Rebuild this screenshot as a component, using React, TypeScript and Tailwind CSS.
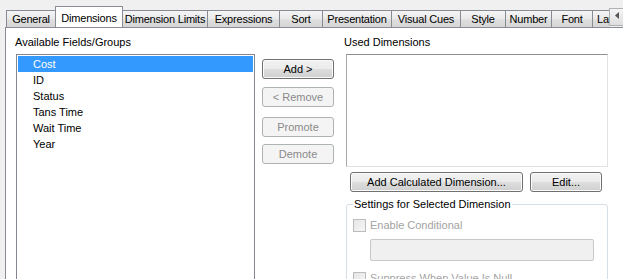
import React from 'react';

const tabs = [
  { label: 'General', w: 'w-[50px]' },
  { label: 'Dimensions', w: 'w-[68px]', active: true },
  { label: 'Dimension Limits', w: 'w-[86px]' },
  { label: 'Expressions', w: 'w-[73px]' },
  { label: 'Sort', w: 'w-[44px]' },
  { label: 'Presentation', w: 'w-[70px]' },
  { label: 'Visual Cues', w: 'w-[70px]' },
  { label: 'Style', w: 'w-[46px]' },
  { label: 'Number', w: 'w-[47px]' },
  { label: 'Font', w: 'w-[42px]' },
];

const fields = ['Cost', 'ID', 'Status', 'Tans Time', 'Wait Time', 'Year'];

function WinButton({ children, disabled, className = '' }: { children: React.ReactNode; disabled?: boolean; className?: string }) {
  if (disabled) {
    return (
      <div className={`h-[20px] shrink-0 flex items-center justify-center rounded-[3px] border border-[#adb2b5] bg-[#f4f4f4] text-[#8a8a8a] ${className}`}>
        {children}
      </div>
    );
  }
  return (
    <div
      className={`h-[20px] shrink-0 flex items-center justify-center rounded-[3px] border border-[#707070] bg-[linear-gradient(#f2f2f2_0%,#ebebeb_48%,#dddddd_52%,#cfcfcf_100%)] shadow-[inset_0_0_0_1px_#fbfbfb] text-black ${className}`}
    >
      {children}
    </div>
  );
}

function CheckBox({ label }: { label: string }) {
  return (
    <div className="flex items-center">
      <div className="w-[13px] h-[13px] shrink-0 border border-[#bcbcbc] bg-[linear-gradient(135deg,#e6e6e6,#f6f6f6)]" />
      <span className="ml-[4px] text-[#a3a3a3] leading-[13px] whitespace-nowrap">{label}</span>
    </div>
  );
}

export default function App() {
  return (
    <div
      className="w-[623px] h-[279px] overflow-hidden bg-[#f0f0f0] flex flex-col text-[11px] text-black"
      style={{ fontFamily: '"Liberation Sans", Arial, sans-serif' }}
    >
      {/* Tab strip */}
      <div className="h-[27px] flex items-end pl-[6px] shrink-0">
        <div className="flex items-end flex-1 overflow-hidden h-[27px]">
          {tabs.map((t) =>
            t.active ? (
              <div
                key={t.label}
                className={`${t.w} shrink-0 h-[22px] -mb-[1px] -mr-px relative z-10 bg-white border border-b-0 border-[#898c95] flex justify-center pt-[3px] tracking-[-0.2px]`}
              >
                {t.label}
              </div>
            ) : (
              <div
                key={t.label}
                className={`${t.w} shrink-0 h-[17px] -mr-px bg-[linear-gradient(#f5f5f5,#e9e9e9_50%,#dedede_55%,#d6d6d6)] border border-b-0 border-[#898c95] flex items-center justify-center tracking-[-0.2px]`}
              >
                {t.label}
              </div>
            )
          )}
          {/* last tab, clipped by the scroll control */}
          <div className="w-[50px] shrink-0 h-[17px] bg-[linear-gradient(#f5f5f5,#e9e9e9_50%,#dedede_55%,#d6d6d6)] border border-b-0 border-[#898c95] flex items-center pl-[4px] tracking-[-0.2px] whitespace-nowrap">
            Layout
          </div>
        </div>
        <div className="w-[16px] h-[18px] shrink-0 border border-[#adb2b5] bg-[linear-gradient(#f5f5f5,#dedede)] flex items-start justify-center pt-[3px] mr-[-2px] mb-[1px]">
          <svg width="4" height="7" viewBox="0 0 4 7">
            <path d="M4 0 L0 3.5 L4 7 Z" fill="#555" />
          </svg>
        </div>
      </div>

      {/* Panel */}
      <div className="flex-1 ml-[5px] border-l border-t border-[#898c95] bg-white flex pl-[9px] pt-[8px] min-h-0">
        {/* Available fields */}
        <div className="w-[240px] flex flex-col shrink-0">
          <div className="leading-[13px] shrink-0">Available Fields/Groups</div>
          <div className="mt-[5px] ml-[1px] flex-1 border border-[#828790] pt-[1px] px-px -mb-[20px]">
            {fields.map((f, i) => (
              <div
                key={f}
                className={`h-[16px] flex items-center pl-[15px] ${i === 0 ? 'bg-[#3399ff] text-white' : ''}`}
              >
                {f}
              </div>
            ))}
          </div>
        </div>

        {/* Move buttons */}
        <div className="ml-[7px] w-[72px] shrink-0 flex flex-col mt-[23px]">
          <WinButton>Add &gt;</WinButton>
          <WinButton disabled className="mt-[8px]">&lt; Remove</WinButton>
          <WinButton disabled className="mt-[10px]">Promote</WinButton>
          <WinButton disabled className="mt-[7px]">Demote</WinButton>
        </div>

        {/* Used dimensions */}
        <div className="ml-[11px] w-[263px] shrink-0 flex flex-col">
          <div className="leading-[13px] -ml-[1px] shrink-0">Used Dimensions</div>
          <div className="mt-[5px] h-[113px] shrink-0 ml-[1px] border border-t-[#8e8f8f] border-l-[#a8a8a8] border-r-[#e3e3e3] border-b-[#e3e3e3] bg-white" />
          <div className="mt-[5px] ml-[5px] flex shrink-0">
            <WinButton className="w-[173px]">Add Calculated Dimension...</WinButton>
            <WinButton className="w-[72px] ml-[7px]">Edit...</WinButton>
          </div>
          <fieldset className="mt-[6px] ml-[1px] h-[100px] shrink-0 border border-[#d5dfe5] rounded-[3px] pl-[6px]">
            <legend className="px-[1px] leading-[13px]">Settings for Selected Dimension</legend>
            <div className="mt-[8px]">
              <CheckBox label="Enable Conditional" />
            </div>
            <div className="mt-[7px] ml-[17px] w-[224px] h-[22px] border border-[#c8c8c8] rounded-[2px] bg-[#f0f0f0]" />
            <div className="mt-[11px]">
              <CheckBox label="Suppress When Value Is Null" />
            </div>
          </fieldset>
        </div>
      </div>
    </div>
  );
}
